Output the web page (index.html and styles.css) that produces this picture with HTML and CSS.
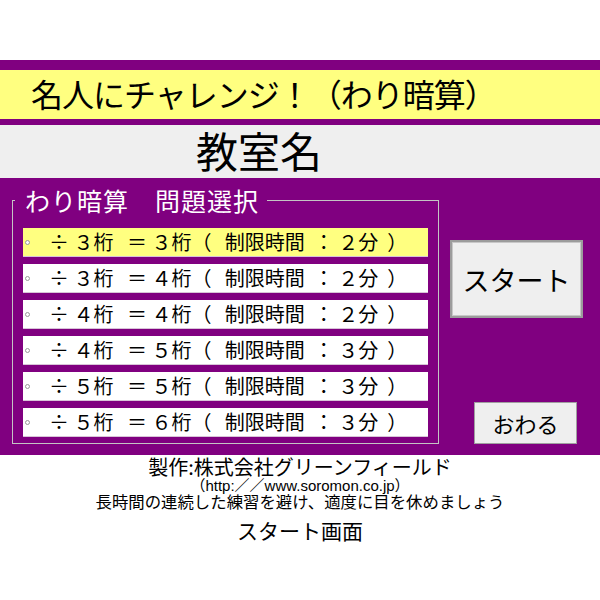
FILE: index.html
```html
<!DOCTYPE html>
<html lang="ja">
<head>
<meta charset="utf-8">
<title>名人にチャレンジ！（わり暗算）</title>
<link rel="stylesheet" href="styles.css">
</head>
<body>
<div class="page">
  <header class="title-band">
    <h1 class="title">名人にチャレンジ！（わり暗算）</h1>
  </header>
  <div class="room">教室名</div>
  <main class="main">
    <fieldset class="select">
      <legend class="select-legend">わり暗算　問題選択</legend>
      <ul class="rows">
        <li class="row selected"><span class="dot"></span><span class="label">÷ ３桁   ＝ ３桁（   制限時間  ： ２分  ）</span></li>
        <li class="row"><span class="dot"></span><span class="label">÷ ３桁   ＝ ４桁（   制限時間  ： ２分  ）</span></li>
        <li class="row"><span class="dot"></span><span class="label">÷ ４桁   ＝ ４桁（   制限時間  ： ２分  ）</span></li>
        <li class="row"><span class="dot"></span><span class="label">÷ ４桁   ＝ ５桁（   制限時間  ： ３分  ）</span></li>
        <li class="row"><span class="dot"></span><span class="label">÷ ５桁   ＝ ５桁（   制限時間  ： ３分  ）</span></li>
        <li class="row"><span class="dot"></span><span class="label">÷ ５桁   ＝ ６桁（   制限時間  ： ３分  ）</span></li>
      </ul>
    </fieldset>
    <div class="actions">
      <button class="btn btn-start" type="button">スタート</button>
      <button class="btn btn-end" type="button">おわる</button>
    </div>
  </main>
  <footer class="footer">
    <p class="maker">製作:株式会社グリーンフィールド</p>
    <p class="url">（http:／／www.soromon.co.jp）</p>
    <p class="note">長時間の連続した練習を避け、適度に目を休めましょう</p>
    <p class="screen">スタート画面</p>
  </footer>
</div>
</body>
</html>
```

FILE: styles.css
```css
html, body {
  margin: 0;
  padding: 0;
  background: #ffffff;
}

body {
  font-family: "Noto Sans CJK JP", "Noto Sans", sans-serif;
  color: #000000;
}

.page {
  padding-top: 60px;
}

.title-band {
  background: #ffff80;
  border-top: 10px solid #800080;
  border-bottom: 6px solid #800080;
  height: 49px;
}

.title {
  margin: 0;
  padding-left: 31px;
  font-size: 32px;
  letter-spacing: -1px;
  font-weight: normal;
  line-height: 47px;
  white-space: nowrap;
}

.room {
  background: #efefef;
  height: 53px;
  box-sizing: border-box;
  padding-bottom: 4px;
  line-height: 49px;
  font-size: 42px;
  text-align: center;
  padding-right: 82px;
}

.main {
  background: #800080;
  height: 277px;
  box-sizing: border-box;
  display: flex;
  align-items: flex-start;
  padding-left: 12px;
}

.select {
  margin: 9px 0 0 0;
  width: 427px;
  box-sizing: border-box;
  min-width: 0;
  border: 1px solid #c4c4c4;
  padding: 15px 10px 6px 10px;
}

.select-legend {
  color: #ffffff;
  font-size: 25px;
  letter-spacing: 1px;
  line-height: 26px;
  margin-left: -8px;
  padding: 0 8px 0 10px;
  white-space: nowrap;
}

.rows {
  list-style: none;
  margin: 0;
  padding: 0;
  display: flex;
  flex-direction: column;
  gap: 7px;
}

.row {
  background: #ffffff;
  height: 29px;
  box-sizing: border-box;
  border-bottom: 1px solid #d8c4d8;
  display: flex;
  align-items: center;
  padding-left: 2px;
}

.row.selected {
  background: #ffff80;
}

.dot {
  width: 3px;
  height: 3px;
  border-radius: 50%;
  border: 1px solid #9a9a9a;
  background: #ffffff;
  flex: none;
}

.label {
  margin-left: 19px;
  font-size: 20px;
  line-height: 28px;
  white-space: pre;
}

.actions {
  margin-left: 11px;
  display: flex;
  flex-direction: column;
  align-items: flex-start;
}

.btn {
  font-family: "Noto Sans CJK JP", "Noto Sans", sans-serif;
  color: #000000;
  background: #efefef;
  border: 1px solid #a0a0a0;
  padding: 0;
  margin: 0;
  box-sizing: border-box;
  cursor: pointer;
}

.btn-start {
  margin-top: 62px;
  width: 133px;
  height: 78px;
  font-size: 27px;
  border: 2px solid #9c9c9c;
  box-shadow: inset 0 0 0 1px #c8c8c8;
}

.btn-end {
  margin-top: 84px;
  margin-left: 24px;
  width: 103px;
  height: 42px;
  font-size: 22px;
}

.footer {
  text-align: center;
}

.footer p {
  margin: 0;
}

.maker {
  font-size: 20px;
  line-height: 24px;
}

.url {
  font-family: "Liberation Sans", "Noto Sans CJK JP", sans-serif;
  font-size: 15px;
  line-height: 13px;
}

.note {
  font-size: 16.4px;
  line-height: 18px;
}

.screen {
  margin-top: 8px !important;
  font-size: 21px;
  line-height: 24px;
}
```
